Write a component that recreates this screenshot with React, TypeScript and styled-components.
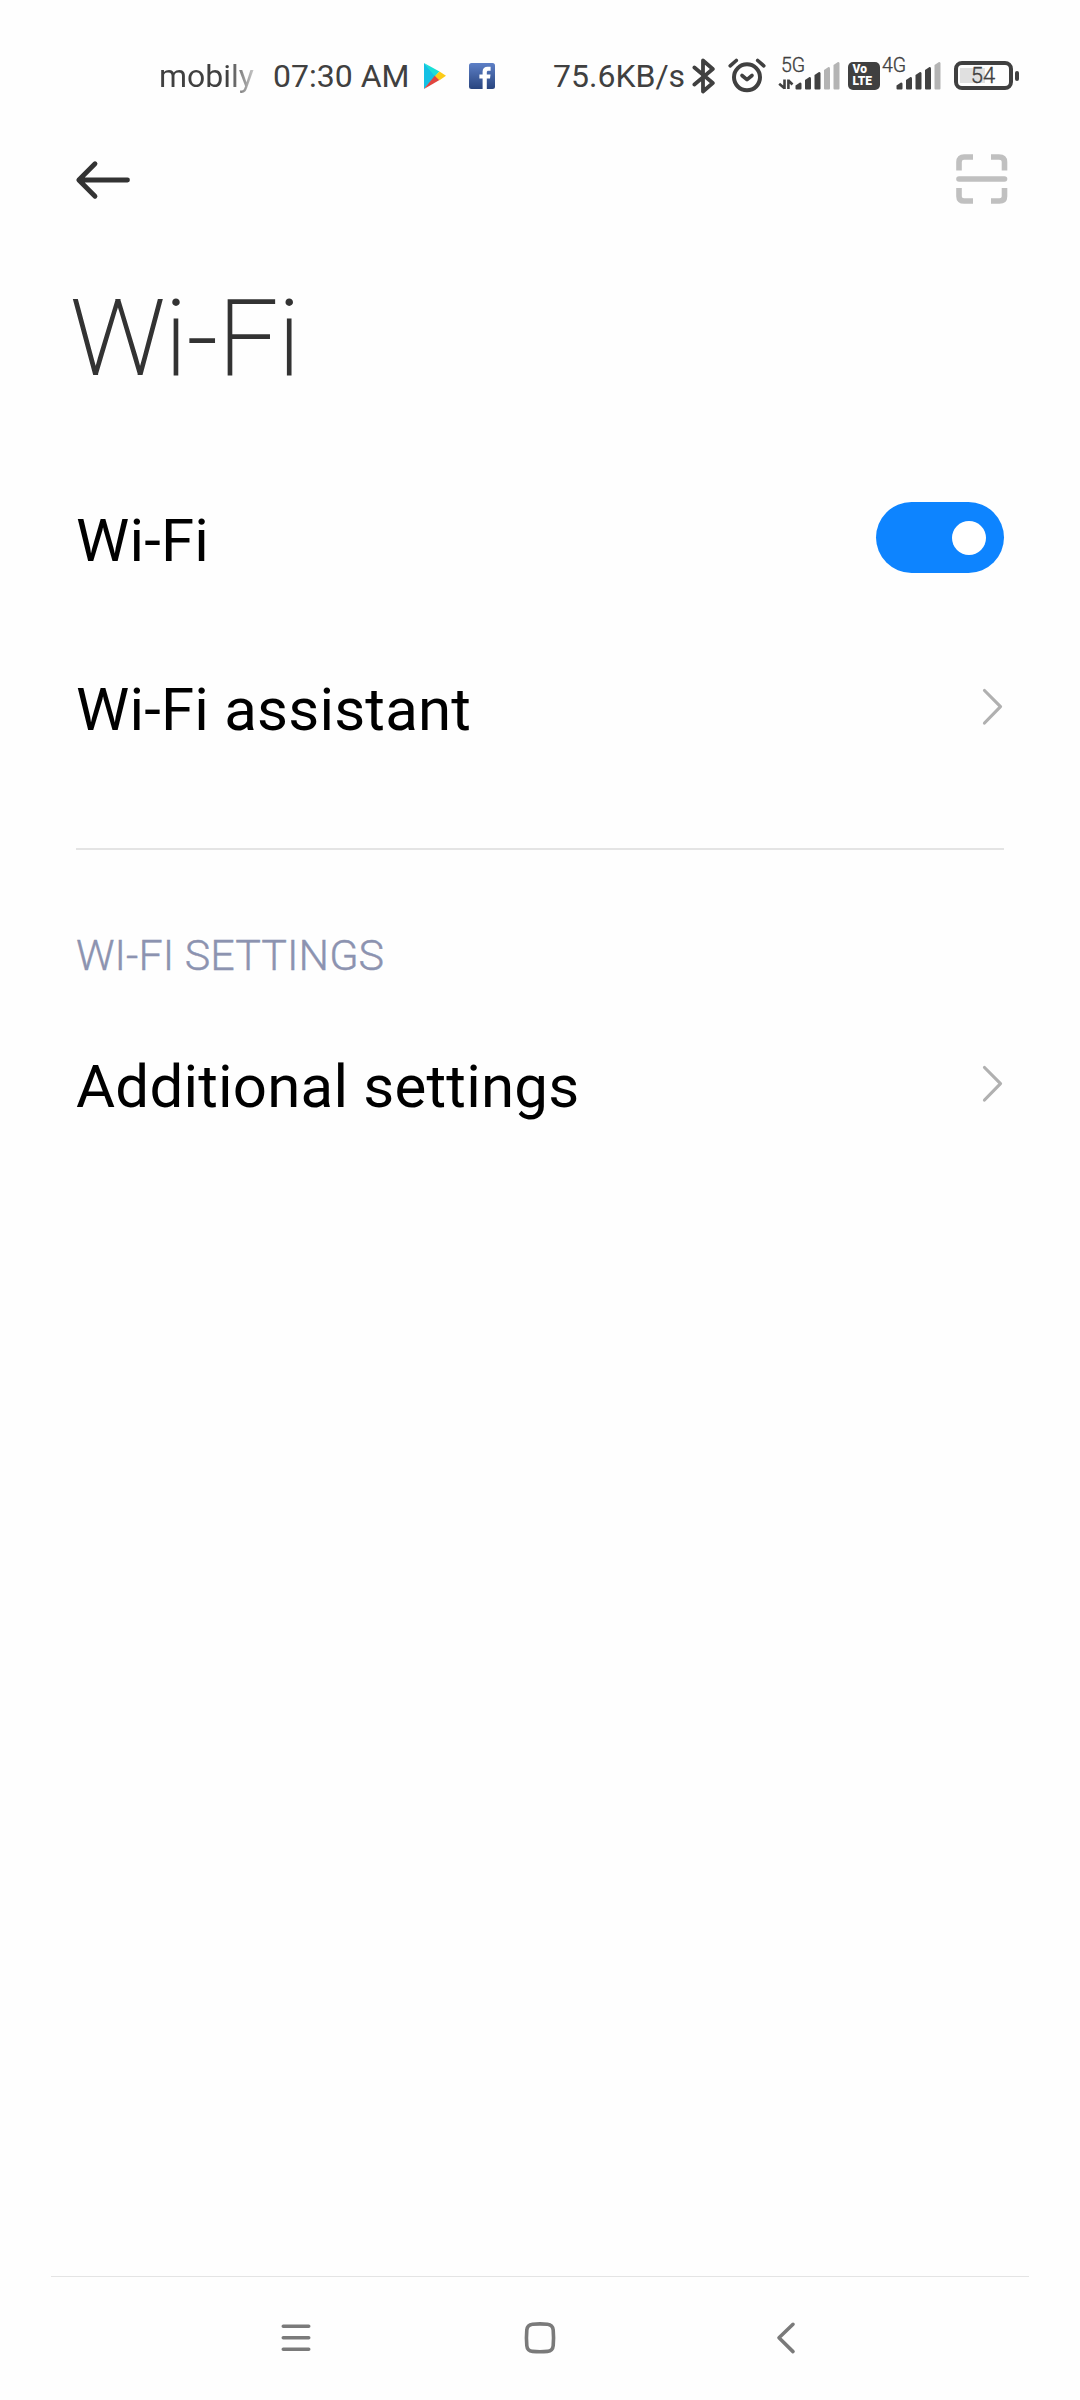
import React from "react";
import styled, { createGlobalStyle } from "styled-components";

const ink = "#404040";

const GlobalStyle = createGlobalStyle`
  html, body { margin: 0; padding: 0; background: #fefefe; }
  * { box-sizing: border-box; }
  svg { display: block; flex: none; }
`;

const Screen = styled.div`
  width: 1080px;
  height: 2400px;
  display: flex;
  flex-direction: column;
  background: #fefefe;
  font-family: Roboto, "Noto Sans", sans-serif;
  overflow: hidden;
`;

const StatusBar = styled.header`
  height: 124px;
  padding: 27px 61.5px 0 159px;
  display: flex;
  align-items: center;
  justify-content: space-between;
  color: ${ink};
`;

const StatusGroup = styled.div`
  display: flex;
  align-items: center;
  height: 40px;
`;

const StatusText = styled.span<{ $width: number }>`
  width: ${(p) => p.$width}px;
  font-size: 32px;
  line-height: 40px;
  white-space: nowrap;
`;

const Carrier = styled(StatusText)`
  color: transparent;
  background: linear-gradient(90deg, ${ink} 0 68px, #cdcdcd 96px);
  background-clip: text;
  -webkit-background-clip: text;
`;

const Gap = styled.span<{ $w: number }>`
  flex: none;
  width: ${(p) => p.$w}px;
`;

const Signal = styled.div`
  position: relative;
  width: 64px;
  height: 40px;
`;

const SignalLabel = styled.span`
  position: absolute;
  left: 3.5px;
  top: -2px;
  font-size: 19.5px;
  line-height: 24px;
  font-weight: 300;
  -webkit-text-stroke: 0.35px ${ink};
`;

const VoLte = styled.div`
  width: 32px;
  height: 28px;
  margin-right: -1px;
  border-radius: 5px;
  background: ${ink};
  color: #fff;
  display: flex;
  flex-direction: column;
  justify-content: center;
  padding-left: 5px;
  font: 900 12px/11.5px Roboto, sans-serif;
`;

const Battery = styled.div`
  width: 59px;
  height: 29px;
  border: 4px solid ${ink};
  border-radius: 8px;
  display: flex;
  align-items: center;
  justify-content: center;
  font-size: 22px;
  line-height: 22px;
  font-weight: 300;
  -webkit-text-stroke: 0.35px ${ink};
  background: linear-gradient(#e0e0e0, #e0e0e0) 2px 3px / 25px 15px no-repeat;
`;

const BatteryTip = styled.span`
  width: 4px;
  height: 10px;
  margin-left: 2px;
  border-radius: 2px;
  background: ${ink};
`;

const ActionBar = styled.nav`
  height: 112px;
  padding: 0 72px 0 74px;
  display: flex;
  align-items: center;
  justify-content: space-between;
`;

const Title = styled.h1`
  margin: 0;
  height: 222px;
  padding: 41px 0 0 71px;
  font-size: 103.5px;
  line-height: 123px;
  font-weight: 100;
  letter-spacing: 0.6px;
  -webkit-text-stroke: 1.9px #333;
  color: #333;
`;

const Row = styled.div<{ $height: number }>`
  height: ${(p) => p.$height}px;
  padding: 0 76px;
  display: flex;
  align-items: center;
  justify-content: space-between;
`;

const RowLabel = styled.span`
  padding-top: 6px;
  font-size: 60px;
  line-height: 70px;
  color: #000;
  letter-spacing: 0.2px;
`;

const Toggle = styled.div`
  width: 128px;
  height: 71px;
  padding: 0 18px;
  border-radius: 36px;
  background: #0d84ff;
  display: flex;
  align-items: center;
  justify-content: flex-end;
`;

const Knob = styled.span`
  width: 34px;
  height: 34px;
  border-radius: 50%;
  background: #fff;
`;

const Divider = styled.hr`
  width: 928px;
  height: 2px;
  margin: 52px 76px 0;
  border: 0;
  background: #e4e4e4;
`;

const SectionTitle = styled.h2`
  margin: 0;
  height: 148px;
  padding: 79px 76px 0;
  font-size: 43px;
  line-height: 53px;
  font-weight: 300;
  letter-spacing: 0.05px;
  -webkit-text-stroke: 0.4px #8c93b0;
  color: #8c93b0;
`;

const Content = styled.main`
  flex: 1;
`;

const NavBar = styled.footer`
  height: 124px;
  margin: 0 51px;
  padding: 0 232px 1px 230px;
  border-top: 1px solid #e4e4e4;
  display: flex;
  align-items: center;
  justify-content: space-between;
`;

const Chevron = () => (
  <svg width="24" height="40" viewBox="0 0.5 24 40" fill="none" stroke="#b0b0b0" strokeWidth="3.2" strokeLinecap="round" strokeLinejoin="round">
    <path d="M4.500 4 20.500 20.200 4.500 36.500" />
  </svg>
);

const Bars = ({ active, arrows }: { active: number; arrows?: boolean }) => {
  const tops = [26.5, 21, 16, 11, 6];
  return (
    <svg width="64" height="40" viewBox="0 0 64 40">
      {arrows && (
        <g fill="none" stroke={ink} strokeWidth="2.6">
          <path d="M6.500 23.500V33M1.200 27.800 6.500 32.300M10.400 33V23.500M10.400 24.500 14.500 28.500" />
        </g>
      )}
      {tops.map((top, i) => {
        const x = 17.5 + i * 9.5;
        return (
          <path
            key={top}
            fill={i < active ? ink : "#b4b4b4"}
            d={`M${x} ${top + 3}L${x + 4.5} ${top}Q${x + 6} ${top - 0.3} ${x + 6} ${top + 1.5}V32.5Q${x + 6} 33.5 ${x + 5} 33.5H${x + 1}Q${x} 33.5 ${x} 32.5Z`}
          />
        );
      })}
    </svg>
  );
};

const PlayIcon = () => (
  <svg width="24" height="28" viewBox="0 0 24 28">
    <path d="M1 1V27L13 14Z" fill="#14c0e4" />
    <path d="M1 1 16.5 9.5 12 14.5Z" fill="#19dfd6" />
    <path d="M1 27 16.5 18 12 13.5Z" fill="#e0453f" />
    <path d="M16.5 9.5 23 13.8 16.5 18.2 12 14Z" fill="#fccb17" />
  </svg>
);

const FacebookIcon = () => (
  <svg width="26" height="26" viewBox="0 0 26 26">
    <defs>
      <linearGradient id="fb" x1="0" y1="0" x2="0" y2="1">
        <stop offset="0" stopColor="#5d7fc6" />
        <stop offset="1" stopColor="#29457f" />
      </linearGradient>
    </defs>
    <rect width="26" height="26" rx="2.5" fill="url(#fb)" />
    <path d="M13.6 26V15.6H10.4V11.4H13.6V8.6C13.6 5.3 15.5 3.7 18.6 3.7H21.6V7.7H19.6C18.2 7.7 17.8 8.3 17.8 9.4V11.4H21.5L21 15.6H17.8V26Z" fill="#fff" />
  </svg>
);

const BluetoothIcon = () => (
  <svg width="24" height="38" viewBox="0 1 24 38" fill="none" stroke={ink} strokeWidth="3.8" strokeLinecap="round" strokeLinejoin="round">
    <path d="M2.4 11.500 20.800 27 11 35.500V4.500L20.800 13 2.400 28.500" />
  </svg>
);

const AlarmIcon = () => (
  <svg width="38" height="36" viewBox="0 1 38 36" fill="none" stroke={ink} strokeWidth="4" strokeLinecap="round" strokeLinejoin="round">
    <circle cx="19" cy="20.300" r="13" />
    <path d="M14 18.500 19 22.700 24 18.500" strokeWidth="3.6" />
    <path d="M2.2 8.8 8.3 3.500M35.800 8.800 29.700 3.500" strokeWidth="3.6" />
  </svg>
);

const BackArrow = () => (
  <svg width="58" height="40" viewBox="0 0 58 40" fill="none" stroke="#333" strokeWidth="4.8" strokeLinecap="round" strokeLinejoin="round">
    <path d="M53.5 20H5M21 3.8 4.8 20 21 36.2" />
  </svg>
);

const ScanIcon = () => (
  <svg width="52" height="52" viewBox="0 1 52 52" fill="none" stroke="#c0c0c0" strokeWidth="5.6">
    <path d="M3 17.5V9Q3 4 8 4H17M35 4H43Q48.500 4 48.500 9V17.500M48.500 35V43.500Q48.500 48 43.500 48H35M17 48H8Q3 48 3 43.500V35" />
    <path d="M3 26H48.500" strokeLinecap="round" />
  </svg>
);

const MenuIcon = () => (
  <svg width="30" height="40" viewBox="0 0 30 40" stroke="#7a7a7a" strokeWidth="3.6" strokeLinecap="round">
    <path d="M2.300 8.300H27.700M2.300 19.800H27.700M2.300 31.300H27.700" />
  </svg>
);

const HomeIcon = () => (
  <svg width="38" height="40" viewBox="0 0 38 40" fill="none" stroke="#7a7a7a" strokeWidth="3.6">
    <path d="M8.500 6.200Q16 5.600 23.500 6.200Q28.700 6.700 29.200 12Q29.900 19.800 29.200 27.600Q28.700 32.900 23.500 33.400Q16 34 8.500 33.400Q3.300 32.900 2.800 27.600Q2.100 19.800 2.800 12Q3.300 6.700 8.500 6.200Z" />
  </svg>
);

const NavBack = () => (
  <svg width="22" height="40" viewBox="0.5 0 22 40" fill="none" stroke="#7a7a7a" strokeWidth="3.6" strokeLinecap="round" strokeLinejoin="round">
    <path d="M18.500 6.300 4.500 19.800 18.500 33.600" />
  </svg>
);

export default function App() {
  return (
    <Screen>
      <GlobalStyle />
      <StatusBar>
        <StatusGroup>
          <Carrier $width={114}>mobily</Carrier>
          <StatusText $width={150}>07:30 AM</StatusText>
          <PlayIcon />
          <Gap $w={22} />
          <FacebookIcon />
        </StatusGroup>
        <StatusGroup>
          <StatusText $width={139}>75.6KB/s</StatusText>
          <BluetoothIcon />
          <Gap $w={12} />
          <AlarmIcon />
          <Gap $w={11.5} />
          <Signal>
            <Bars active={3} arrows />
            <SignalLabel>5G</SignalLabel>
          </Signal>
          <Gap $w={6} />
          <VoLte>
            <span>Vo</span>
            <span>LTE</span>
          </VoLte>
          <Signal>
            <Bars active={4} />
            <SignalLabel>4G</SignalLabel>
          </Signal>
          <Gap $w={11} />
          <Battery>54</Battery>
          <BatteryTip />
        </StatusGroup>
      </StatusBar>
      <ActionBar>
        <BackArrow />
        <ScanIcon />
      </ActionBar>
      <Title>Wi-Fi</Title>
      <Content>
        <Row $height={159}>
          <RowLabel>Wi-Fi</RowLabel>
          <Toggle role="switch" aria-checked="true">
            <Knob />
          </Toggle>
        </Row>
        <Row $height={179}>
          <RowLabel>Wi-Fi assistant</RowLabel>
          <Chevron />
        </Row>
        <Divider />
        <SectionTitle>WI-FI SETTINGS</SectionTitle>
        <Row $height={171}>
          <RowLabel>Additional settings</RowLabel>
          <Chevron />
        </Row>
      </Content>
      <NavBar>
        <MenuIcon />
        <HomeIcon />
        <NavBack />
      </NavBar>
    </Screen>
  );
}
